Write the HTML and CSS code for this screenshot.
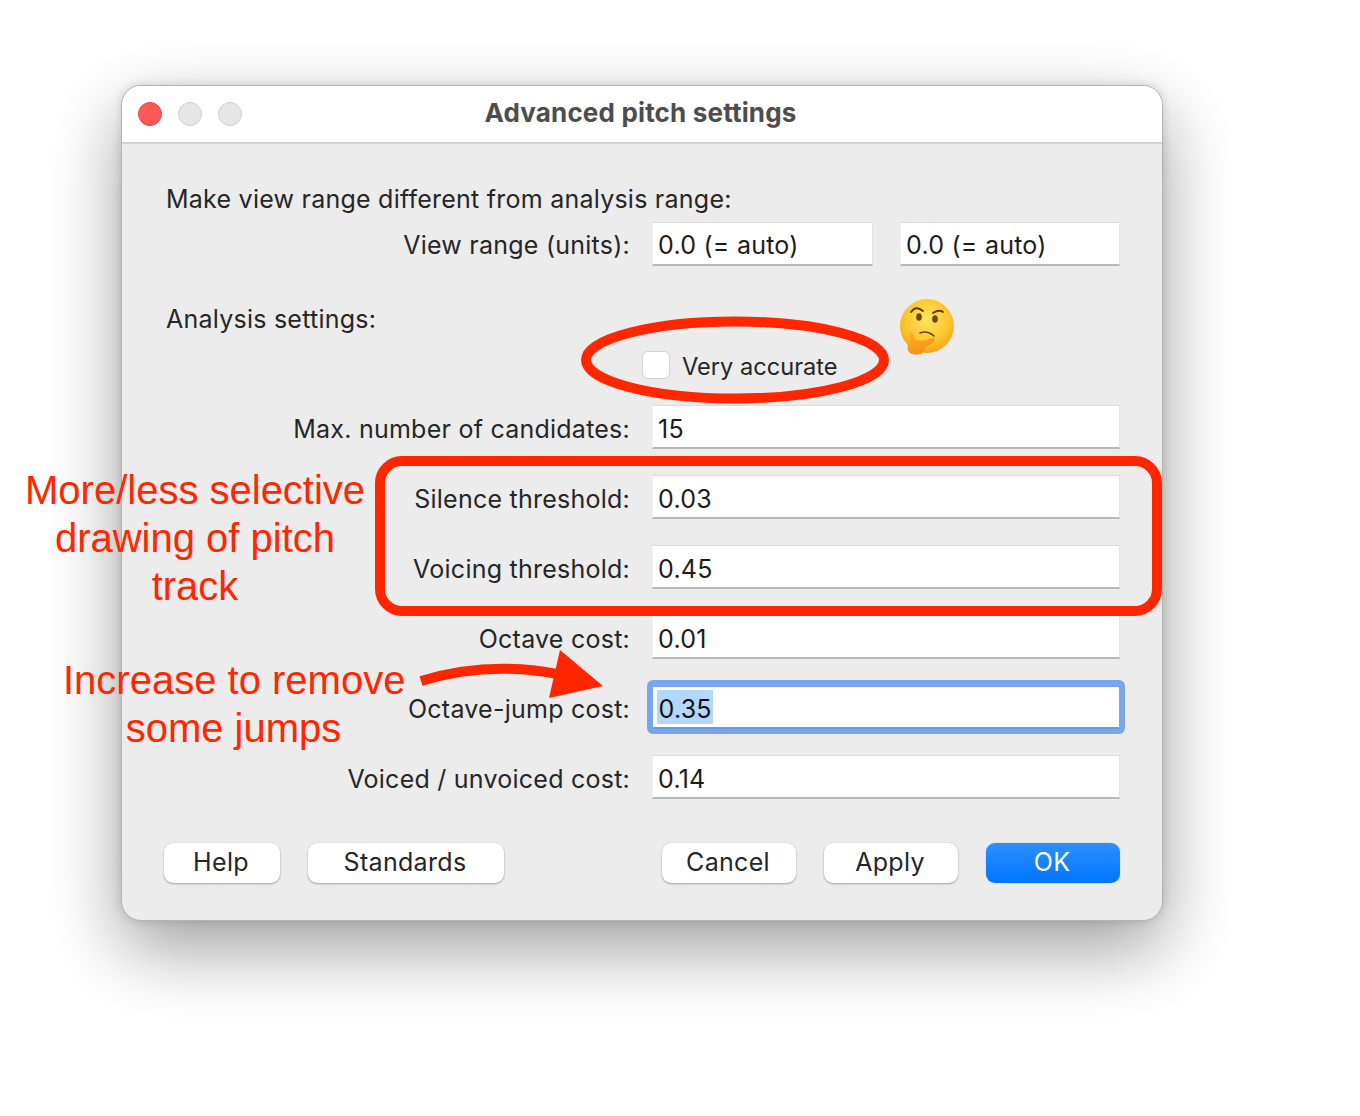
FILE: index.html
```html
<!DOCTYPE html>
<html lang="en">
<head>
<meta charset="utf-8">
<title>Advanced pitch settings</title>
<link rel="stylesheet" href="styles.css">
</head>
<body>
<div class="window">
  <header class="titlebar">
    <div class="lights"><span class="light red"></span><span class="light"></span><span class="light"></span></div>
    <h1 class="title">Advanced pitch settings</h1>
  </header>
  <div class="content">
    <p class="heading first">Make view range different from analysis range:</p>
    <div class="row row-view">
      <label class="lbl">View range (units):</label>
      <div class="pair"><div class="field">0.0 (= auto)</div><div class="field">0.0 (= auto)</div></div>
    </div>
    <p class="heading second">Analysis settings:</p>
    <div class="check-row"><span class="check"></span><span class="check-text">Very accurate</span></div>
    <div class="row"><label class="lbl">Max. number of candidates:</label><div class="field">15</div></div>
    <div class="row"><label class="lbl">Silence threshold:</label><div class="field">0.03</div></div>
    <div class="row"><label class="lbl">Voicing threshold:</label><div class="field">0.45</div></div>
    <div class="row"><label class="lbl">Octave cost:</label><div class="field">0.01</div></div>
    <div class="row"><label class="lbl">Octave-jump cost:</label><div class="field focus"><span class="sel">0.35</span></div></div>
    <div class="row"><label class="lbl">Voiced / unvoiced cost:</label><div class="field">0.14</div></div>
    <div class="buttons">
      <button class="btn help">Help</button>
      <button class="btn standards">Standards</button>
      <button class="btn cancel">Cancel</button>
      <button class="btn apply">Apply</button>
      <button class="btn ok">OK</button>
    </div>
  </div>
</div>

<svg class="overlay" width="1360" height="1116" viewBox="0 0 1360 1116" aria-hidden="true">
  <defs>
    <radialGradient id="face" cx="0.5" cy="0.38" r="0.68">
      <stop offset="0" stop-color="#ffe45c"/>
      <stop offset="0.6" stop-color="#fdc62e"/>
      <stop offset="1" stop-color="#f39c12"/>
    </radialGradient>
    <linearGradient id="hand" x1="0" y1="0" x2="0.4" y2="1">
      <stop offset="0" stop-color="#fbb02a"/>
      <stop offset="1" stop-color="#f59318"/>
    </linearGradient>
  </defs>
  <ellipse cx="735" cy="360" rx="149" ry="38.5" fill="none" stroke="#ff2600" stroke-width="10"/>
  <rect x="380" y="461" width="777" height="150" rx="22" fill="none" stroke="#ff2600" stroke-width="10"/>
  <path d="M421 681 Q490 660 562 675" fill="none" stroke="#ff2600" stroke-width="10"/>
  <path d="M560 650 L603 686 L549 698 Z" fill="#ff2600"/>
  <circle cx="927" cy="326" r="27" fill="url(#face)"/>
  <path d="M911 312 Q916 305 923 311" fill="none" stroke="#5e3c10" stroke-width="1.8" stroke-linecap="round"/>
  <path d="M933 313 Q939 309 943 312" fill="none" stroke="#5e3c10" stroke-width="1.8" stroke-linecap="round"/>
  <ellipse cx="919" cy="317" rx="2.8" ry="3.8" fill="#6b4512"/>
  <ellipse cx="935" cy="319" rx="2.8" ry="3.8" fill="#6b4512"/>
  <path d="M920 333 Q927 330 934 336" fill="none" stroke="#6b4512" stroke-width="1.6" stroke-linecap="round"/>
  <path d="M909 332 Q913 331 914 337 L915 340 Q924 342 932 338 Q936 337 934 341 Q930 346 925 347 L924 352 Q920 356 912 354 Q906 352 908 344 Q911 340 909 332 Z" fill="url(#hand)"/>
</svg>
<div class="note note-a">More/less selective<br>drawing of pitch<br>track</div>
<div class="note note-b">Increase to remove<br>some jumps</div>
</body>
</html>
```
FILE: styles.css
```css
* { box-sizing: border-box; }
html, body { margin: 0; padding: 0; }
body {
  position: relative;
  width: 1360px;
  height: 1116px;
  overflow: hidden;
  background: #fff;
  font-family: Inter, "Noto Sans", sans-serif;
  font-size: 25px;
  letter-spacing: 0.24px;
  color: #262626;
}
.window {
  position: relative;
  margin: 85px 0 0 121px;
  width: 1042px;
  height: 836px;
  background: #ececec;
  border: 1px solid #b4b4b4;
  border-radius: 20px;
  box-shadow: 0 28px 72px rgba(0,0,0,.38), 0 0 10px rgba(0,0,0,.14);
}
.titlebar {
  position: relative;
  height: 58px;
  background: #fff;
  border-bottom: 2px solid #d0d0d0;
  border-radius: 19px 19px 0 0;
  display: flex;
  align-items: center;
  justify-content: center;
}
.lights {
  position: absolute;
  left: 16px;
  top: 16px;
  display: flex;
  gap: 16px;
}
.light {
  width: 24px;
  height: 24px;
  border-radius: 50%;
  background: #e6e6e6;
  border: 1px solid #cfcfcf;
}
.light.red { background: #ff5a58; border-color: #e2463f; }
.title {
  margin: 0 3px 2px 0;
  font-size: 26px;
  letter-spacing: 0.17px;
  font-weight: 700;
  color: #4d4d4d;
  line-height: 30px;
}
.content { padding: 0 42px; }
.heading { margin: 0 0 0 2px; line-height: 30px; }
.heading.first { padding-top: 40px; margin-bottom: 8px; }
.heading.second { margin-top: 38px; }
.row {
  display: grid;
  grid-template-columns: 466px 468px;
  column-gap: 22px;
  align-items: center;
  margin-bottom: 26px;
}
.lbl { text-align: right; padding-top: 4px; }
.pair { display: grid; grid-template-columns: 221px 220px; column-gap: 27px; }
.field {
  height: 44px;
  background: #fff;
  border-top: 1px solid #dcdcdc;
  border-left: 1px solid #f3f3f3;
  border-right: 1px solid #e4e4e4;
  border-bottom: 2px solid #b8b8b8;
  padding-left: 5px;
  line-height: 47px;
  color: #1c1c1c;
  overflow: hidden;
}
.row-view .lbl { padding-top: 2px; }
.row-view .field { line-height: 45px; }
.field.focus {
  display: flex;
  align-items: center;
  padding-left: 4px;
  box-shadow: 0 0 0 5px #78a6ee;
  border: solid #78a6ee;
  border-width: 2px 1px;
  border-bottom-color: #6c9ae4;
  border-radius: 2px;
  overflow: visible;
}
.sel {
  display: block;
  height: 34px;
  padding: 0 1.5px;
  background: #b3d7ff;
  line-height: 38px;
  color: #111;
  overflow: hidden;
}
.check-row {
  display: flex;
  align-items: center;
  gap: 12px;
  margin: 17px 0 26px 478px;
  height: 28px;
}
.check {
  width: 28px;
  height: 28px;
  border-radius: 6px;
  background: #fff;
  border: 1px solid #d2d2d2;
}
.check-text {
  font-size: 23.6px;
  letter-spacing: 0;
  padding-top: 2px;
}
.buttons {
  display: flex;
  margin-top: 44px;
}
.btn {
  height: 40px;
  border: 0;
  border-radius: 9px;
  background: #fff;
  font: inherit;
  letter-spacing: 0.32px;
  color: #262626;
  padding: 0 2px 2px 0;
  box-shadow: 0 1px 2px rgba(0,0,0,.3), 0 0 1px rgba(0,0,0,.2);
}
.help { width: 116px; margin-right: 28px; }
.standards { width: 196px; margin-right: 158px; }
.cancel { width: 134px; margin-right: 28px; }
.apply { width: 134px; margin-right: 28px; }
.ok {
  width: 134px;
  color: #fff;
  background: linear-gradient(#2d90ff, #0075ff);
  box-shadow: 0 0 1px rgba(0,80,200,.5);
}
.overlay { position: absolute; left: 0; top: 0; pointer-events: none; }
.note {
  position: absolute;
  font-family: "Liberation Sans", Arial, sans-serif;
  font-size: 40px;
  letter-spacing: 0;
  line-height: 48px;
  color: #ff2600;
  text-align: center;
  white-space: nowrap;
}
.note-a { left: 25px; top: 466px; width: 340px; }
.note-b { left: 63px; top: 656px; width: 341px; }
```
